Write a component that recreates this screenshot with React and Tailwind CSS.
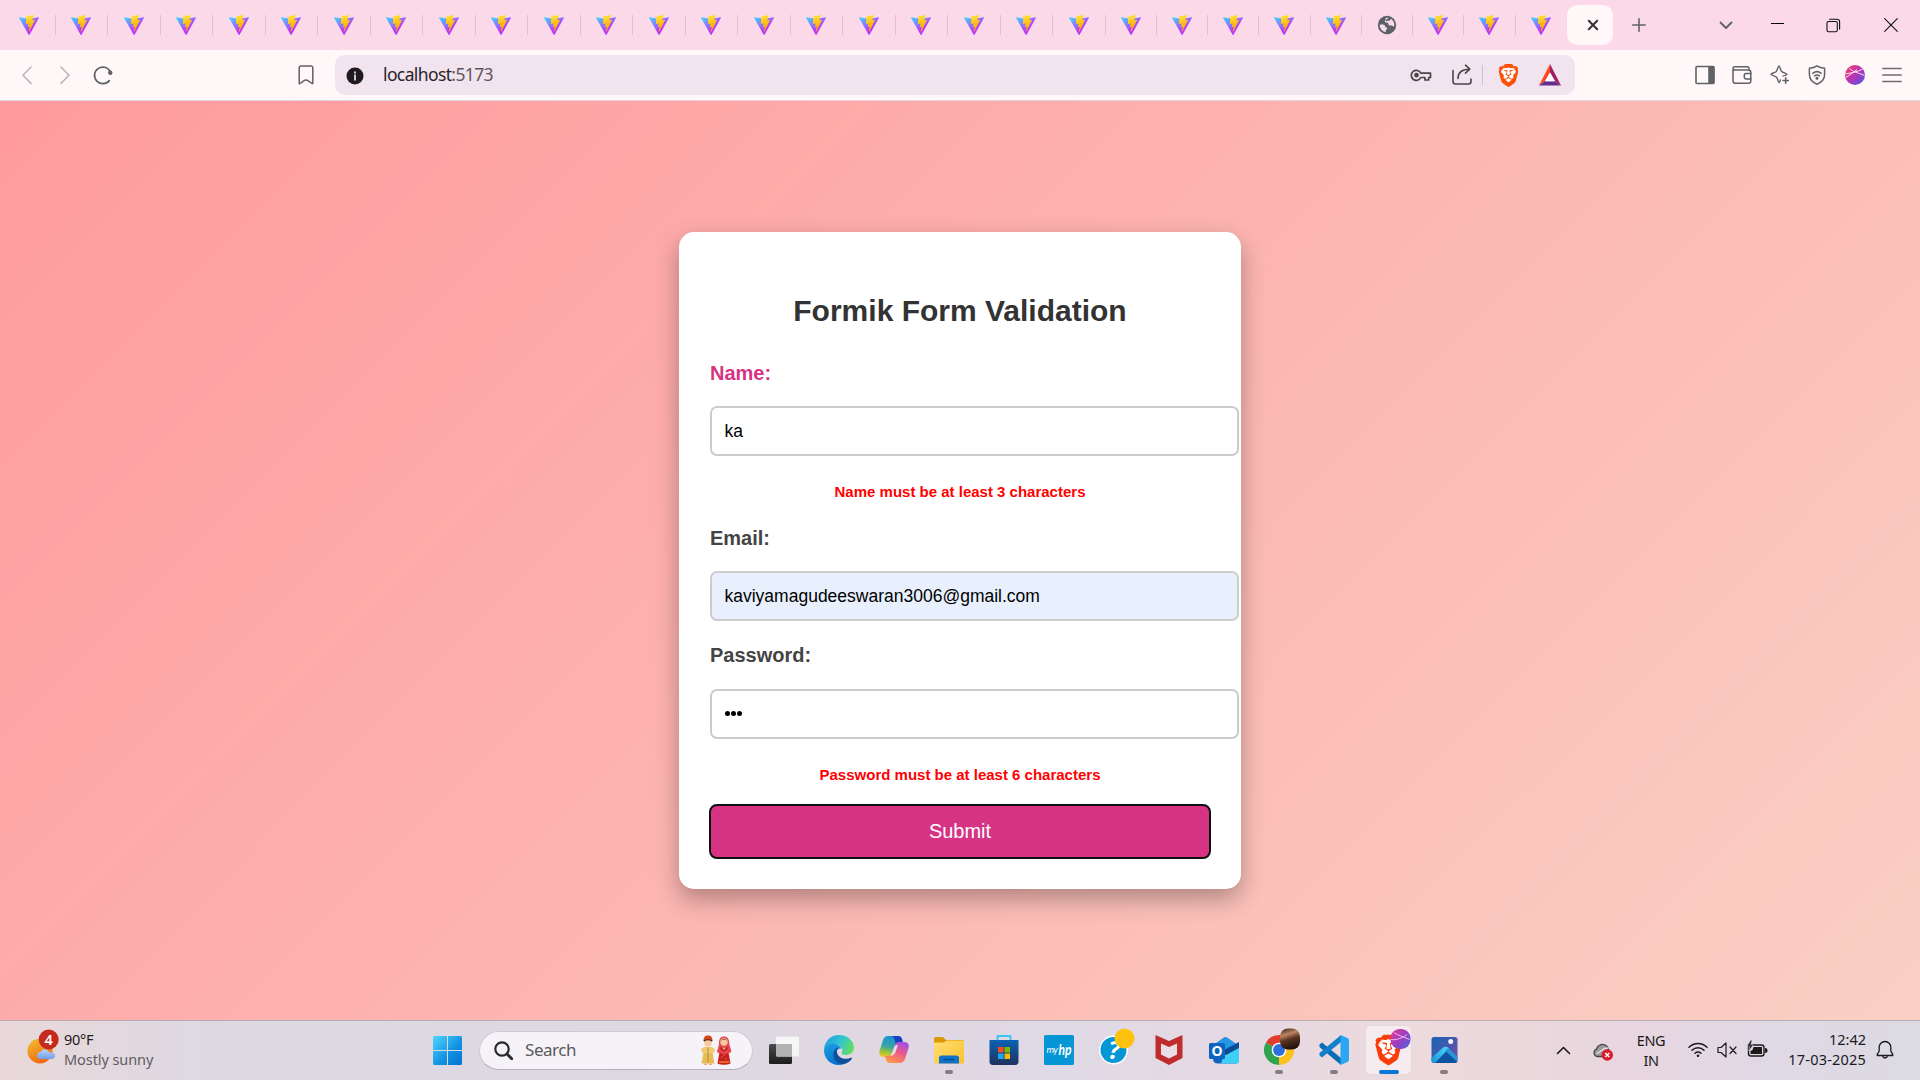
import React from "react";
import { SiBrave } from "react-icons/si";

const Defs = () => (
  <svg width="0" height="0" className="absolute">
    <defs>
      <linearGradient id="va" x1="0" y1="0.08" x2="0.56" y2="0.72"><stop stopColor="#41D1FF" /><stop offset="1" stopColor="#BD34FE" /></linearGradient>
      <linearGradient id="vb" x1="0.4" y1="0" x2="0.55" y2="0.8"><stop stopColor="#FFEA83" /><stop offset="0.08" stopColor="#FFDD35" /><stop offset="1" stopColor="#FFA800" /></linearGradient>
      <linearGradient id="avatar" x1="0" y1="0" x2="1" y2="1"><stop stopColor="#ff3f63" /><stop offset="0.5" stopColor="#b535b5" /><stop offset="1" stopColor="#4a57e8" /></linearGradient>
      <linearGradient id="avatar2" x1="0" y1="0.2" x2="0.9" y2="1"><stop stopColor="#d83aa0" /><stop offset="0.5" stopColor="#9a3fc0" /><stop offset="1" stopColor="#5560e0" /></linearGradient>
      <linearGradient id="sun" x1="0.2" y1="0" x2="0.6" y2="1"><stop stopColor="#f0bb32" /><stop offset="1" stopColor="#f2660f" /></linearGradient>
      <linearGradient id="cloud" x1="0" y1="0" x2="0" y2="1"><stop stopColor="#b9d3fb" /><stop offset="1" stopColor="#6f9ff0" /></linearGradient>
      <linearGradient id="win" gradientUnits="userSpaceOnUse" x1="0" y1="0" x2="29" y2="29"><stop stopColor="#4fd5ff" /><stop offset="0.6" stopColor="#1190e0" /><stop offset="1" stopColor="#0673d0" /></linearGradient>
    </defs>
  </svg>
);

const Vite = () => (
  <svg width="20" height="20" viewBox="0 0 256 257">
    <path fill="url(#va)" d="M255.153 37.938L134.897 252.976c-2.483 4.44-8.862 4.466-11.382.048L.875 37.958c-2.746-4.814 1.371-10.646 6.827-9.67l120.385 21.517a6.537 6.537 0 0 0 2.322-.004l117.867-21.483c5.438-.991 9.574 4.796 6.877 9.62Z" />
    <path fill="url(#vb)" d="M185.432.063L96.44 17.501a3.268 3.268 0 0 0-2.634 3.014l-5.474 92.456a3.268 3.268 0 0 0 3.997 3.378l24.777-5.718c2.318-.535 4.413 1.507 3.936 3.838l-7.361 36.047c-.495 2.426 1.782 4.5 4.151 3.78l15.304-4.649c2.372-.72 4.652 1.36 4.15 3.788l-11.698 56.621c-.732 3.542 3.979 5.473 5.943 2.437l1.313-2.028l72.516-144.72c1.215-2.423-.88-5.186-3.54-4.672l-25.505 4.922c-2.396.462-4.435-1.77-3.759-4.114l16.646-57.705c.677-2.35-1.37-4.583-3.769-4.113Z" />
  </svg>
);

const Globe = () => (
  <svg width="20" height="20" viewBox="0 0 20 20">
    <circle cx="10" cy="10" r="9.2" fill="#5c6068" />
    <path d="M2.700 9.500h3c2 0 2.500 1 2.500 2.300 0 .8 1.800.4 2 1.400.2 1.300-1.200 1.300-1.400 2.400l-.2 1.600A7.300 7.300 0 0 1 2.700 9.500ZM8.500 2.900 11 2.700c1 1-1.500 1.500-2.600 2.300C7.300 6 7.800 7.500 9.300 7.600c1.500 0 2.200.8 2.200 1.900 0 1 1.500 1.200 2.700 1 1.200 0 1.400 1 3 .7a7.400 7.400 0 0 0-3.400-7.400c-.5 1.600-1.500 2.200-2.900 2-1.200-.1-1 .6-1.900.5" fill="#f9d9ea" />
  </svg>
);

const Tab = ({ children, wide, last }) => (
  <div className={(wide ? "w-[52.5px]" : "w-[51.25px]") + " flex h-5 shrink-0 items-center"}>
    <div className="flex flex-1 justify-center">{children}</div>
    <div className={(last ? "bg-transparent" : "bg-[#dcc3d0]") + " h-5 w-px"} />
  </div>
);

const Ico = ({ size = 20, vb = "0 0 20 20", sw = 1.4, color = "#5f6368", children, ...p }) => (
  <svg width={size} height={size} viewBox={vb} fill="none" stroke={color} strokeWidth={sw} strokeLinecap="round" strokeLinejoin="round" {...p}>{children}</svg>
);

const Slot = ({ w = "w-[37.5px]", children }) => <div className={w + " flex shrink-0 items-center justify-center"}>{children}</div>;

const TabBar = () => (
  <div className="flex h-[50px] items-center bg-[#fbd9e9] pl-[3px]">
    {Array.from({ length: 21 }, (_, i) => <Tab key={i} wide><Vite /></Tab>)}
    {Array.from({ length: 9 }, (_, i) => <Tab key={i} last={i === 8}>{i === 5 ? <Globe /> : <Vite />}</Tab>)}
    <div className="ml-[0.5px] flex h-10 w-[46px] shrink-0 items-center justify-center rounded-[10px] bg-[#fff7f8] pl-[5px]">
      <Ico size={12} vb="0 0 12 12" sw={2} color="#33303a"><path d="m1.800 1.800 8.400 8.400M10.200 1.800 1.800 10.200" /></Ico>
    </div>
    <Slot w="w-[52px]"><Ico size={14} vb="0 0 14 14" sw={1.6}><path d="M7 .8v12.400M.8 7h12.400" /></Ico></Slot>
    <div className="ml-[41px] mr-[3px] flex w-10 justify-center"><Ico size={14} vb="0 0 14 14" sw={1.900}><path d="M1.500 4.500 7 10l5.500-5.500" /></Ico></div>
    <Slot w="w-14"><div className="mb-[3px] h-px w-[13px] bg-black" /></Slot>
    <Slot w="w-14"><Ico size={15} vb="0 0 15 15" sw={1.100} color="#111"><rect x="1" y="3.500" width="10.300" height="10.300" rx="1.500" /><path d="M3.700 1.200h7.300a2.600 2.600 0 0 1 2.600 2.600v7.300" /></Ico></Slot>
    <Slot w="w-[59px]"><Ico size={14} vb="0 0 14 14" sw={1.100} color="#111"><path d="m.7.7 12.600 12.600M13.300.7.7 13.300" /></Ico></Slot>
  </div>
);

const Toolbar = () => (
  <div className="flex h-[51px] items-center border-b border-[#e3d5dc] bg-[#fff7f8] pl-2">
    <Slot w="w-[38px]"><Ico color="#bab6b9" sw={1.600}><path d="M14 2 6 10.200l8 8.200" /></Ico></Slot>
    <Slot w="w-[38px]"><Ico color="#bab6b9" sw={1.600}><path d="m6 2 8 8.200-8 8.200" /></Ico></Slot>
    <Slot w="w-[37px]"><Ico size={20} sw={1.700}><path d="M16.300 15.600A8.300 8.300 0 1 1 17.200 6.500" /><circle cx="17.300" cy="7.800" r="2.200" fill="#5f6368" stroke="none" /></Ico></Slot>
    <div className="ml-[166px] mr-[10px] flex w-[38px] justify-center">
      <Ico sw={1.500}><path d="M5 1h10a1.800 1.800 0 0 1 1.800 1.800v15.300q0 1-.9.400l-3.600-2.600a4 4 0 0 0-4.600 0l-3.600 2.600q-.9.6-.9-.4V2.800A1.800 1.800 0 0 1 5 1Z" /></Ico>
    </div>
    <div className="flex h-10 w-[1240px] shrink-0 items-center rounded-[10px] bg-[#f1e4ee]">
      <Slot w="w-10">
        <svg width="18" height="18" viewBox="0 0 18 18" className="mt-0.5"><circle cx="9" cy="9" r="8.500" fill="#1f1a1e" /><path d="M8 4.500h2v1.900H8ZM8 7.600h2v5.800H8Z" fill="#cfc5cd" /></svg>
      </Slot>
      <div className="ml-2 flex-1 pb-px font-['Noto_Sans',sans-serif] text-[17.5px] tracking-[-0.62px] text-[#2a2328]">localhost<span className="text-[#5e555b]">:5173</span></div>
      <Slot w="w-[42px]">
        <Ico size={22} vb="0 0 22 22" sw={1.700} color="#4b4449"><path d="M10.800 9.200h9.700v4.300h-1.800v2.500h-3.800v-2.500h-4.100A5 5 0 1 1 10.800 9.200Z" /><circle cx="6.500" cy="11.200" r="1.500" fill="#4b4449" /></Ico>
      </Slot>
      <Slot w="w-[40px]">
        <Ico size={22} vb="0 0 22 22" sw={1.600} color="#4b4449"><path d="M2 6.500v11A2.500 2.500 0 0 0 4.500 20h13a2.500 2.500 0 0 0 2.500-2.500V15M7 14.500c0-5.500 3-9.300 11.500-9.300M14.500 1.200l4.300 4-4.300 4" /></Ico>
      </Slot>
      <div className="mr-1 h-5 w-px bg-[#cdc2ca]" />
      <Slot w="w-[42px]">
        <div className="flex h-6 w-6 items-center justify-center bg-[radial-gradient(circle,#fff_7px,transparent_7.5px)]">
          <SiBrave size={23} color="#fb5209" />
        </div>
      </Slot>
      <div className="mr-1 flex w-[42px] justify-center">
        <svg width="22" height="22" viewBox="0 0 22 22"><path d="M11 0v8.500L6 17.300 0 21.500Z" fill="#ff4724" /><path d="M11 0v8.500l5 8.800 6 4.200Z" fill="#9e1f63" /><path d="m0 21.500 6-4.200h10l6 4.200Z" fill="#662d91" /><path d="m11 8.500 5 8.800H6Z" fill="#fff" /></svg>
      </div>
    </div>
    <div className="ml-[111px] flex">
      <Slot><Ico sw={1.600}><rect x="1" y="1.500" width="18" height="17" rx="1" /><path d="M14 2h4.500v16H14Z" fill="#5f6368" /></Ico></Slot>
      <Slot><Ico sw={1.500}><path d="M1 3.500V16a2.300 2.300 0 0 0 2.300 2.300h13.200A2.300 2.300 0 0 0 18.800 16V7.300A2.300 2.300 0 0 0 16.500 5H2.700A1.600 1.600 0 0 1 1 3.500 1.600 1.600 0 0 1 2.700 1.700h12.500A1.800 1.800 0 0 1 17 3.500V5" /><path d="M18.800 8.500h-4.500a2 2 0 0 0-2 2v1.400a2 2 0 0 0 2 2h4.500" /></Ico></Slot>
      <Slot><Ico sw={1.400}><path d="M9 1c.9 0 1.300 3.200 2.200 4.800C12.500 8 17 8.200 17 9.300c0 .8-2.200 1-3.800 1.800M9 1C8 1 7.800 4.700 6.200 6.500 4.800 8 1 8.200 1 9.300s4 1.500 5.500 3S8 17.500 9 17.500c.6 0 1-1.400 1.400-2.500" /><path d="M15.700 12.800v5.400M13 15.500h5.400" strokeWidth="1.600" /></Ico></Slot>
      <Slot><Ico sw={1.500}><path d="M10 .9c2 1.500 4.500 2.200 7.600 2.400v6.200c0 4.600-2.800 7.700-7.600 9.700-4.800-2-7.600-5.100-7.600-9.700V3.300C5.500 3.100 8 2.400 10 .9Z" /><path d="M5.800 8.300c2.500-2 5.900-2 8.400 0M7.500 10.900c1.500-1.200 3.500-1.200 5 0" /><circle cx="10" cy="13.300" r=".8" fill="#5f6368" /></Ico></Slot>
      <Slot><svg width="20" height="20" viewBox="0 0 20 20"><circle cx="10" cy="10" r="10" fill="url(#avatar)" /><path d="M.5 9C7 7.500 13 7 17.500 4M4.500 3.500c4 3.500 8 4 15 7M1 12.500C6 9 9 7 12 4.500" stroke="#ffe0ef" strokeWidth="1" fill="none" /></svg></Slot>
      <Slot><Ico sw={1.700} color="#6f6c72"><path d="M1 3.500h18M1 10h18M1 16.500h18" /></Ico></Slot>
    </div>
  </div>
);

const Label = ({ children, active }) => (
  <div className={(active ? "text-[#d63384]" : "text-[#444]") + " h-6 text-[20px] font-bold leading-6"}>{children}</div>
);
const Field = ({ children, filled }) => (
  <div className={(filled ? "bg-[#e8f0fe]" : "bg-white") + " flex h-[50px] w-[529px] items-center rounded-[7px] border-2 border-[#ccc] pl-[12.5px] text-[17.5px] text-black"}>{children}</div>
);
const Err = ({ children }) => <div className="h-[18px] text-center text-[15px] font-bold leading-[18px] text-[#f00]">{children}</div>;

const FormPage = () => (
  <div className="flex h-[919px] justify-center bg-[linear-gradient(135deg,#ff9a9e,#fad0c4)] pt-[131px] font-['Liberation_Sans',Arial,sans-serif]">
    <div className="h-[657px] w-[562px] rounded-[15px] bg-white px-[31px] pt-[61px] shadow-[0_10px_25px_rgba(0,0,0,0.3)]">
      <h1 className="h-9 text-center text-[30px] font-bold leading-9 text-[#333]">Formik Form Validation</h1>
      <div className="mt-[32px]"><Label active>Name:</Label></div>
      <div className="mt-[21px]"><Field>ka</Field></div>
      <div className="mt-[27px]"><Err>Name must be at least 3 characters</Err></div>
      <div className="mt-[25px]"><Label>Email:</Label></div>
      <div className="mt-[21px]"><Field filled>kaviyamagudeeswaran3006@gmail.com</Field></div>
      <div className="mt-[22px]"><Label>Password:</Label></div>
      <div className="mt-[22px]"><Field><span className="flex gap-[1.200px] pb-0.5"><i className="size-[5px] rounded-full bg-black" /><i className="size-[5px] rounded-full bg-black" /><i className="size-[5px] rounded-full bg-black" /></span></Field></div>
      <div className="mt-[27px]"><Err>Password must be at least 6 characters</Err></div>
      <button className="mx-[-1px] mt-[20px] flex h-[55px] w-[502px] items-center justify-center rounded-[8px] border-2 border-[#101010] bg-[#d63384] pb-px text-[20px] text-white">Submit</button>
    </div>
  </div>
);

const App55 = ({ children, dot, active }) => (
  <div className="flex w-[55px] shrink-0 justify-center">
    <div className={(active ? "bg-[#f6ecef] shadow-[0_0_0_1px_#e5d9de]" : "") + " flex h-12 w-[45px] flex-col items-center rounded-[5px] pt-[8px]"}>
      <div className="h-[32px]">{children}</div>
      {dot && <div className="mt-[4px] h-1 w-2 rounded-full bg-[#857d82]" />}
      {active && <div className="mt-[4px] h-1 w-5 rounded-full bg-[#0a78d4]" />}
    </div>
  </div>
);

const S = ({ children }) => <svg width="32" height="32" viewBox="0 0 32 32" className="overflow-visible">{children}</svg>;

const Doll = ({ x, bride }) => (
  <g transform={`translate(${x} 0)`}>
    {bride ? (
      <>
        <path d="M2.500 9C2 3 5 1.500 7.500 1.500S13 3 12.800 9l2 7-1.500 2H2.500l-1.500-2Z" fill="#e5484f" />
        <circle cx="7.500" cy="7" r="3.700" fill="#f6c9a0" /><path d="M4 6q3.500-4 7 0Q7.500 3 4 6Z" fill="#33201c" />
        <path d="M4 12h7l3 16c.3 2.300-13.300 2.300-13 0Z" fill="#c81f1e" /><path d="M.5 15 3 13.500 7 17l5-3.500 2.500 1.500-.5 2.700L7.500 19 1 17.700Z" fill="#e5484f" /><path d="M5.500 12.500 7.500 15l2-2.500Z" fill="#f3b58c" />
        <path d="M2.500 27h10.500M5 22h1M9 24h1M7 20h1" stroke="#efb13a" strokeWidth="1.200" />
      </>
    ) : (
      <>
        <circle cx="7.500" cy="7.500" r="3.900" fill="#f6c9a0" /><path d="M3 6Q3 0 7.500.5 12 0 12 6 7.500 3.500 3 6Z" fill="#d3481f" /><path d="M3.300 6q4.200-2.500 8.400 0" stroke="#3a2418" strokeWidth="1.200" fill="none" />
        <path d="M4 12h7l3 16.500H1Z" fill="#e6bd57" /><path d="M.5 14 4 11.700l3.500 2 3.500-2 3.500 2.300-.8 3.500-6.200 1-6.200-1Z" fill="#eecb6e" /><path d="M7.500 13v15" stroke="#b98a2b" strokeWidth="1" />
        <path d="M3.500 28.500h3v1.500h-3ZM8.500 28.500h3v1.500h-3Z" fill="#e9a983" />
      </>
    )}
  </g>
);

const Taskbar = () => (
  <div className="flex h-[60px] items-center border-t border-[#b5afb5] bg-[linear-gradient(90deg,#e9d8d9_0%,#ddd9e3_11%,#dcd9e3_30%,#e0d7e2_48%,#dfdae6_55%,#e6d9e3_64%,#ecdadd_74%,#ebd8dc_79%,#e7d6e0_86%,#dfd9e5_92%,#dcdae2_100%)] pb-px font-['Noto_Sans','Segoe_UI',sans-serif]">
    <div className="flex w-[433px] items-center pl-[26px]">
      <svg width="34" height="38" viewBox="0 0 34 38" className="-mt-[7px]">
        <circle cx="14" cy="23" r="12.500" fill="url(#sun)" />
        <path d="M14.500 31a3.500 3.500 0 0 1 .3-7c1-3.500 6.500-4 8 0 5 .5 7 1.500 6.200 4.500-.5 1.800-1.800 2.500-3.500 2.500Z" fill="url(#cloud)" />
        <circle cx="22.700" cy="11.500" r="10" fill="#c42b1c" />
        <text x="22.600" y="17" textAnchor="middle" fontSize="14.500" fontWeight="600" fill="#fff" fontFamily="Noto Sans">4</text>
      </svg>
      <div className="-mt-[3px] ml-1 text-[14.500px] leading-5">
        <div className="tracking-[-0.3px] text-[#1b1a1c]">90°F</div>
        <div className="tracking-[-0.080px] text-[#605c62]">Mostly sunny</div>
      </div>
    </div>
    <svg width="29" height="29" viewBox="0 0 29 29"><g fill="url(#win)"><path d="M0 1.500Q0 0 1.500 0H14v14H0ZM15 0h12.500Q29 0 29 1.500V14H15ZM0 15h14v14H1.500Q0 29 0 27.500ZM15 15h14v12.500Q29 29 27.500 29H15Z" /></g></svg>
    <div className="ml-[17px] mr-1 flex h-[39px] w-[274px] shrink-0 items-center rounded-full border border-[#cfcad5] border-b-[#b5b1bb] bg-[#f5f3f7] pl-[14px] pr-[19px]">
      <Ico size={19} vb="0 0 19 19" sw={2.200} color="#2b2a2d"><circle cx="8" cy="8" r="6.700" /><path d="m13 13 4.700 4.700" strokeWidth="3" /></Ico>
      <div className="ml-[12px] flex-1 text-[17px] tracking-[-0.45px] text-[#5a585d]">Search</div>
      <svg width="33" height="31" viewBox="0 0 33 31"><Doll x={0.500} /><Doll x={16.500} bride /></svg>
    </div>
    <div className="-ml-px flex">
      <App55><S>
        <defs><linearGradient id="tv" x2="0" y2="1"><stop stopColor="#4a4a4a" /><stop offset="1" stopColor="#1d1d1d" /></linearGradient></defs>
        <rect x="1" y="10" width="23" height="20" rx="1.500" fill="url(#tv)" /><rect x="8" y="2.500" width="23" height="20" rx="1.500" fill="#f6f6f6" /><path d="M8 10h16v12.500H9.500Q8 22.500 8 21Z" fill="#b2b2b2" />
      </S></App55>
      <App55><S>
        <defs>
          <linearGradient id="e1" x1="0" y1="0.3" x2="1" y2="0.6"><stop stopColor="#1f9fe0" /><stop offset="0.5" stopColor="#2fc3d2" /><stop offset="1" stopColor="#66e05a" /></linearGradient>
          <linearGradient id="e2" x1="0" y1="0" x2="0.4" y2="1"><stop stopColor="#1ba0e2" /><stop offset="1" stopColor="#0673cf" /></linearGradient>
        </defs>
        <path d="M1 15.500C1.500 7 8 1 16 1c9 0 15 6.500 15 12.500 0 5-4 7.500-8 7.500-3.500 0-5-1.500-4.500-2.500 1-1.500 1.500-2.500.5-4.500C16 9 5 9 1 15.500Z" fill="url(#e1)" />
        <path d="M1 16c2-5.500 8-7.500 12.500-5.500 3 1.300 5 3 5.300 4.300-1.500-.8-6 .5-6.500 5C12 24 15 29 20 30.300 10 33 1 26.500 1 16Z" fill="url(#e2)" />
        <path d="M14 13.500C8 18 9.500 28 19 30.500c4.500-.5 8-3 10-6 .5-1-.5-1-1-.7-5 2.200-13 .7-14-5.300-.3-2 .2-3.500 1-4.300Z" fill="#0f4f9b" />
      </S></App55>
      <App55><S>
        <defs>
          <linearGradient id="c1" x1="0.4" y1="0" x2="0.2" y2="1"><stop stopColor="#1793d6" /><stop offset="0.5" stopColor="#3aa6a0" /><stop offset="0.75" stopColor="#9ac43c" /><stop offset="1" stopColor="#f2c62a" /></linearGradient>
          <linearGradient id="c2" x1="0.8" y1="0" x2="0.3" y2="1"><stop stopColor="#a24be8" /><stop offset="0.5" stopColor="#ee5b86" /><stop offset="1" stopColor="#ff9a4a" /></linearGradient>
        </defs>
        <path d="M10 2h10q3 0 4 3l1 4h-3q-3 0-4 3l-3 8q-1 3-4 3H5q-5-1-3.500-6L5 6q1.500-4 5-4Z" fill="url(#c1)" />
        <path d="M17 2h3q3 0 4 3l1 4h-4q-2 0-3 2l-1-4q-1-4-3-5Z" fill="#1b3fc4" />
        <path d="M22 29H12q-3 0-4-3l-1-4h3q3 0 4-3l3-8q1-3 4-3h6q5 1 3.500 6L27 25q-1.500 4-5 4Z" fill="url(#c2)" />
        <path d="M14 19 16.500 12q1-1 3.500-1L17.500 18q-.8 2.500-3 3.500-2 .5-2-.5 1-.5 1.500-2Z" fill="#e5dfe9" />
      </S></App55>
      <App55 dot><S>
        <defs><linearGradient id="fo" x1="0" y1="0" x2="1" y2="1"><stop stopColor="#ffe074" /><stop offset="1" stopColor="#fdbf2c" /></linearGradient></defs>
        <path d="M1 4.500Q1 3 2.500 3H10l3 3h16.500Q31 6 31 7.500V12H1Z" fill="#dd9a05" /><path d="M1 8.500h10l3-2h15.500Q31 6.500 31 8v20q0 1.500-1.500 1.500h-27Q1 29.500 1 28Z" fill="url(#fo)" /><path d="M6 29.500V24q0-2.500 2.500-2.500h15Q26 21.500 26 24v5.500Z" fill="#1072c8" /><path d="M10.500 25.500h11" stroke="#084f93" strokeWidth="1.500" />
      </S></App55>
      <App55><S>
        <defs><linearGradient id="st" x2="0" y2="1"><stop stopColor="#0a62b4" /><stop offset="1" stopColor="#20325d" /></linearGradient></defs>
        <path d="M9.500 7V2.800q0-.8.800-.8h11.400q.8 0 .8.800V7" stroke="#35c6f4" strokeWidth="2" fill="none" /><path d="M1.500 6h29v21.500q0 3.500-3.500 3.500H5q-3.500 0-3.500-3.500Z" fill="url(#st)" /><path fill="#f25022" d="M10 13h5.500v5.500H10Z" /><path fill="#7fba00" d="M16.500 13H22v5.500h-5.500Z" /><path fill="#1ea7f0" d="M10 19.500h5.500V25H10Z" /><path fill="#ffb900" d="M16.500 19.500H22V25h-5.500Z" />
      </S></App55>
      <App55><S>
        <rect x="1" y="1" width="30" height="30" rx="1.500" fill="#0596d6" /><text x="3.500" y="19" fontSize="9.500" fill="#fff" fontStyle="italic" fontFamily="Lato" letterSpacing="-0.5">my</text><text x="15.500" y="21" fontSize="15" fontWeight="700" fill="#fff" fontStyle="italic" fontFamily="Lato" textLength="13" lengthAdjust="spacingAndGlyphs">hp</text>
      </S></App55>
      <App55><S>
        <circle cx="15.500" cy="16" r="14.500" fill="#fff" /><circle cx="15.500" cy="16" r="13" fill="#0596d6" /><text x="16" y="25" textAnchor="middle" fontSize="25" fontWeight="700" fill="#fff" fontFamily="Noto Sans" fontStyle="italic">?</text><circle cx="26.500" cy="4.500" r="10" fill="#ffc20e" />
      </S></App55>
      <App55><S>
        <path d="M2.500 1 16 7 29.500 1v23L16 31 2.500 24Z" fill="#bf2c2c" /><path d="M8 9.500 16 13l8-3.500v11L16 24.500l-8-4Z" fill="#e9dde6" />
      </S></App55>
      <App55><S>
        <path d="M5 11.500 15.500 4q2-1.500 4 0L31 12v14.500q0 3-3 3H10q-5 0-5-5Z" fill="#1263bd" /><path d="M8 9 15.500 4q2-1.500 4 0L31 12l-12 8Z" fill="#2597e4" /><path d="m16 21 15-9v14.500q0 3-3 3H13Z" fill="#3fd0f5" /><path d="m14 17 17-9v6L18 21Z" fill="#0b4c97" /><rect x="1" y="9" width="16" height="16" rx="1.500" fill="#0c64c0" /><text x="9" y="22" textAnchor="middle" fontSize="14" fontWeight="700" fill="#fff" fontFamily="Noto Sans">O</text>
      </S></App55>
      <App55 dot><S>
        <defs><linearGradient id="ph" x1="0" y1="0" x2="0.300" y2="1"><stop stopColor="#2d1a16" /><stop offset="0.35" stopColor="#c08460" /><stop offset="0.6" stopColor="#5a3424" /><stop offset="1" stopColor="#241411" /></linearGradient></defs>
        <path d="M16 16 3 8.500A15 15 0 0 1 29 8.500Z" fill="#e33b2e" /><path d="M16 16 3 8.500A15 15 0 0 0 16 31l6.500-11.300Z" fill="#31a350" /><path d="M16 16 29 8.500A15 15 0 0 1 16 31Z" fill="#fcc21b" /><path d="M16 8.800h13.200L22 19.500Z" fill="#fcc21b" /><circle cx="16" cy="16" r="7.300" fill="#fff" /><circle cx="16" cy="16" r="5.900" fill="#2a6fe0" /><rect x="17" y="-5.500" width="20" height="21" rx="8" fill="url(#ph)" />
      </S></App55>
      <App55 dot><S>
        <path d="m1.500 10.500 2.500-2 19 15.500V31L1.500 13Z" fill="#0b6bb5" /><path d="m1.500 21.500 2.500 2L23 8V1L1.500 19Z" fill="#127fcb" /><path d="m22.500 1 7 3q1.500.8 1.500 2.500v19q0 1.700-1.500 2.500l-7 3Z" fill="#2aa6f2" />
      </S></App55>
      <App55 active><S>
        <circle cx="15.500" cy="15.500" r="10" fill="#fff" />
        <SiBrave x={0} y={0.5} size={31} color="#fb3d0c" />
        <rect x="17.500" y="-5" width="20" height="20" rx="9" fill="url(#avatar2)" /><path d="M18 5.500c6 1 12-2 16-5M21-1.500c4 3 9 4 15.500 7" stroke="#f2b9ef" strokeWidth="1" fill="none" />
      </S></App55>
      <App55 dot><S>
        <defs><linearGradient id="im" x2="1" y2="0.800"><stop stopColor="#1765b5" /><stop offset="1" stopColor="#6b4fa5" /></linearGradient><linearGradient id="im2" x1="1" y1="0" x2="0" y2="1"><stop stopColor="#53dcfb" /><stop offset="1" stopColor="#1592da" /></linearGradient></defs>
        <rect x="3.500" y="3" width="26" height="26" rx="2.500" fill="url(#im)" /><path d="m10 25 8.500-9 10.500 11.500q-.8 1.500-2.500 1.500H6Z" fill="#0f549f" /><path d="M3.500 24 14.500 14q3-2.300 6 0l2.500 2.500h-4L7 29H6q-2.500 0-2.500-2.500Z" fill="url(#im2)" /><path d="m20.500 14 9 9v3.500q0 .8-.3 1.200L17 16.500Z" fill="#2795dc" /><circle cx="22.700" cy="7.500" r="2.500" fill="#f1f1f8" />
      </S></App55>
    </div>
    <div className="ml-auto flex items-center">
      <Slot w="w-[30px]"><Ico size={15} vb="0 0 15 15" sw={1.600} color="#1b1a1c"><path d="m1.500 10.500 6-6 6 6" /></Ico></Slot>
      <div className="ml-[15px] mt-1 w-5">
        <svg width="20" height="18" viewBox="0 0 20 18"><path d="M4 13.500A4 4 0 0 1 3.500 6C5 1.500 11-.5 14.500 4l2 4.500-7 5Z" fill="#9b9a9c" stroke="#444346" strokeWidth="1.300" /><path d="m3.500 11 8-5.500 4-.5" stroke="#e0dce2" strokeWidth="1.500" fill="none" /><circle cx="14.300" cy="12" r="5.700" fill="#dc1c2e" /><path d="m12.300 10 4 4m0-4-4 4" stroke="#fff" strokeWidth="1.500" /></svg>
      </div>
      <div className="-mt-px ml-[23px] w-[30px] text-center text-[14.500px] leading-5 tracking-[-0.4px] text-[#1b1a1c]"><div>ENG</div><div>IN</div></div>
      <div className="ml-[22px] w-5">
        <Ico size={20} sw={1.500} color="#1b1a1c"><path d="M1 7.200c5-5 13-5 18 0M4 10.300c3.300-3.500 8.700-3.500 12 0M7 13.200c1.700-1.700 4.300-1.700 6 0" /><circle cx="10" cy="15.700" r="1.300" fill="#1b1a1c" stroke="none" /></Ico>
      </div>
      <div className="ml-[9px] w-5">
        <Ico size={20} sw={1.200} color="#1b1a1c"><path d="M1 7.500h3L9 3v14l-5-4.500H1ZM13 7l6 6.500M19 7l-6 6.500" /></Ico>
      </div>
      <div className="ml-[9px] w-[22px]">
        <svg width="22" height="20" viewBox="0 0 22 20"><rect x="2.500" y="5" width="15.500" height="11" rx="2.500" fill="none" stroke="#1b1a1c" strokeWidth="1.400" /><path d="M19 8q2.500 0 2.500 2.500T19 13Z" fill="#1b1a1c" /><path d="M7.500 7H16v7H4.500v-3l2-1Z" fill="#1b1a1c" /><path d="M4.800 0 1 6.300h2.500L2.800 11 7 5H4.600L6 .5Z" fill="#1b1a1c" stroke="#dfd9e5" strokeWidth=".5" /></svg>
      </div>
      <div className="-mt-[3px] ml-[18px] w-[80px] whitespace-nowrap text-right text-[14.500px] leading-5 text-[#1b1a1c]"><div>12:42</div><div className="tracking-[0.2px]">17-03-2025</div></div>
      <div className="ml-[9px] mr-[25px]">
        <Ico size={20} sw={1.300} color="#1b1a1c"><path d="M10 1.500c-3.400 0-5.800 2.600-5.800 5.800V11l-2 3.600q-.3.900.6.900h14.400q.9 0 .6-.9l-2-3.600V7.300c0-3.200-2.400-5.800-5.800-5.800ZM7.600 15.800c.3 1.500 1.200 2.200 2.400 2.200s2.100-.7 2.400-2.200" /></Ico>
      </div>
    </div>
  </div>
);

export default function App() {
  return (
    <div className="h-[1080px] w-[1920px] overflow-hidden">
      <Defs />
      <TabBar />
      <Toolbar />
      <FormPage />
      <Taskbar />
    </div>
  );
}
